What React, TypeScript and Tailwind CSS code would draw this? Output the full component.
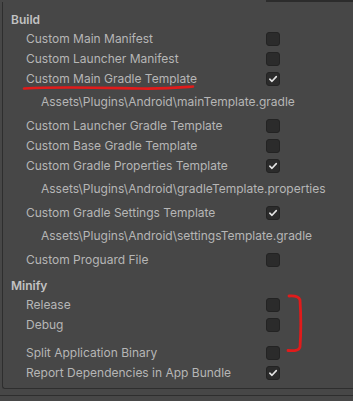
import { Fragment } from "react";

type Row =
  | { kind: "header"; label: string }
  | { kind: "toggle"; label: string; checked: boolean }
  | { kind: "path"; label: string }
  | { kind: "gap"; size: "sm" | "md" };

const rows: Row[] = [
  { kind: "header", label: "Build" },
  { kind: "toggle", label: "Custom Main Manifest", checked: false },
  { kind: "toggle", label: "Custom Launcher Manifest", checked: false },
  { kind: "toggle", label: "Custom Main Gradle Template", checked: true },
  { kind: "path", label: "Assets\\Plugins\\Android\\mainTemplate.gradle" },
  { kind: "toggle", label: "Custom Launcher Gradle Template", checked: false },
  { kind: "toggle", label: "Custom Base Gradle Template", checked: false },
  { kind: "toggle", label: "Custom Gradle Properties Template", checked: true },
  { kind: "path", label: "Assets\\Plugins\\Android\\gradleTemplate.properties" },
  { kind: "toggle", label: "Custom Gradle Settings Template", checked: true },
  { kind: "path", label: "Assets\\Plugins\\Android\\settingsTemplate.gradle" },
  { kind: "toggle", label: "Custom Proguard File", checked: false },
  { kind: "gap", size: "sm" },
  { kind: "header", label: "Minify" },
  { kind: "toggle", label: "Release", checked: false },
  { kind: "toggle", label: "Debug", checked: false },
  { kind: "gap", size: "md" },
  { kind: "toggle", label: "Split Application Binary", checked: false },
  { kind: "toggle", label: "Report Dependencies in App Bundle", checked: true },
];

function Checkbox({ checked }: { checked: boolean }) {
  return (
    <div className="flex size-[14px] items-center justify-center rounded-[3px] border border-[#232323] bg-[#2b2b2b]">
      {checked && (
        <svg width="10" height="10" viewBox="0 0 10 10" fill="none">
          <path d="M1.8 5.2 L4 7.3 L8.3 2.6" stroke="#e4e4e4" strokeWidth="1.6" strokeLinecap="round" strokeLinejoin="round" />
        </svg>
      )}
    </div>
  );
}

export default function App() {
  return (
    <div className="relative h-[401px] w-[353px] overflow-hidden bg-[#474747] font-['Inter','Liberation_Sans',sans-serif] text-[12px] text-[#b6b6b6]">
      {/* top field edge */}
      <div className="ml-[266px] h-[2px] bg-[#2c2c2c]" />

      <div className="ml-[2px] h-[387px] rounded-bl-[3px] border-b border-l border-[#2e2e2e] pt-[9px]">
        {rows.map((row, i) => (
          <Fragment key={i}>
            {row.kind === "header" && (
              <div className="flex h-[18px] items-center pl-[8px] font-semibold text-[#c2c2c2]">{row.label}</div>
            )}
            {row.kind === "toggle" && (
              <div className="flex h-[20px] items-center">
                <div className="w-[263px] pl-[23px]">{row.label}</div>
                <Checkbox checked={row.checked} />
              </div>
            )}
            {row.kind === "path" && (
              <div className="flex h-[27px] items-center pb-[1px] pl-[38px]">{row.label}</div>
            )}
            {row.kind === "gap" && <div className={row.size === "sm" ? "h-[7px]" : "h-[8px]"} />}
          </Fragment>
        ))}
      </div>

      <div className="mt-[6px] h-[1px] bg-[#2e2e2e]" />

      {/* red annotations */}
      <svg className="pointer-events-none absolute left-0 top-0" width="353" height="401" viewBox="0 0 353 401" fill="none">
        <path d="M24 88.5 C60 86.5 100 87.8 140 88.5 C165 89 180 87.5 193 86.5" stroke="#e01b1b" strokeWidth="2.6" strokeLinecap="round" />
        <path d="M289 296 C296 295.5 299 297 300 300 C301 315 301 333 300 347 C299 351 294 351 288 350.5" stroke="#e01b1b" strokeWidth="2.8" strokeLinecap="round" />
      </svg>
    </div>
  );
}
